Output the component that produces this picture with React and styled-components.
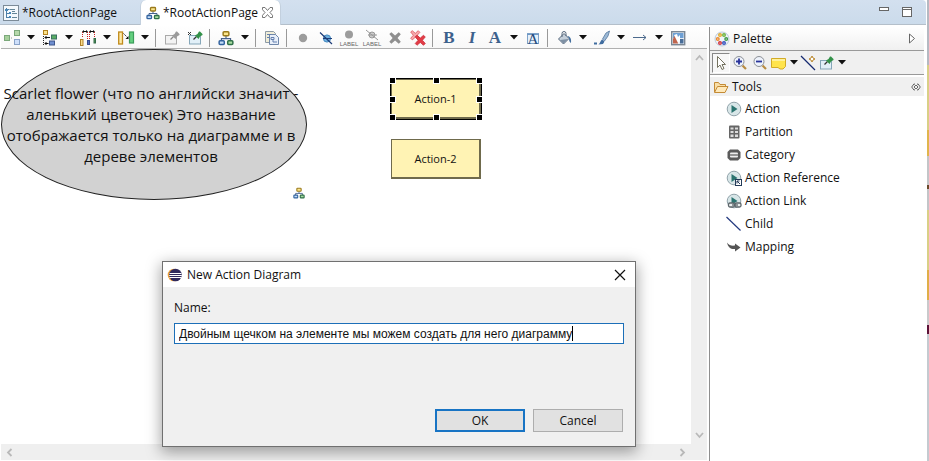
import React from "react";
import styled, { createGlobalStyle, css } from "styled-components";

const GlobalStyle = createGlobalStyle`
  * { box-sizing: border-box; }
  body { margin: 0; background: #fff; }
  body, button, input { font-family: "Open Sans", "Noto Sans", sans-serif; font-size: 12px; line-height: 16px; color: #111; }
  button { border: 0; padding: 0; background: none; }
  svg { display: block; flex: none; overflow: visible; }
  ul { list-style: none; margin: 0; padding: 0; }
`;

/* ---------- layout ---------- */

const Workbench = styled.div`
  position: relative;
  display: flex;
  min-height: 100vh;
  overflow: hidden;
`;

const Editor = styled.main`
  flex: 1;
  min-width: 0;
  display: flex;
  flex-direction: column;
  padding-right: 1px;
  background: #fff;
`;

const TabBar = styled.header`
  display: flex;
  height: 25px;
  flex: none;
  background: linear-gradient(#d3e0ef, #cbdbeb);
  border-bottom: 1px solid #b4bfca;
  border-top-right-radius: 4px;
`;

const Tab = styled.button`
  display: flex;
  align-items: center;
  gap: 3px;
  height: 25px;
  padding: 0 7px 0 3px;
  width: ${(p) => (p.$active ? "141px" : "140px")};
  ${(p) =>
    p.$active &&
    css`
      background: #fff;
      border: 1px solid #c3d0de;
      border-width: 0 1px;
      border-radius: 6px 6px 0 0;
      padding-left: 5px;
    `}
`;

const TabLabel = styled.span`
  flex: 1;
  text-align: left;
  white-space: nowrap;
`;

const WindowControls = styled.div`
  margin-left: auto;
  display: flex;
  gap: 12px;
  align-items: center;
  padding-right: 14px;
`;

const Columns = styled.div`
  flex: 1;
  display: flex;
  min-height: 0;
`;

const DiagramPane = styled.section`
  flex: 1;
  min-width: 0;
  display: flex;
  flex-direction: column;
  padding: 0 2px 0 1px;
`;

const Toolbar = styled.div`
  display: flex;
  align-items: center;
  flex: none;
  height: 24px;
  padding-top: 2px;
  background: linear-gradient(#fff, #f8f8f8);
  border-bottom: 1px solid #b0b0b0;
`;

const ToolButton = styled.button`
  display: flex;
  align-items: center;
  height: 20px;
  padding-left: 3px;
  width: ${(p) => (p.$menu ? "38px" : "23px")};
  gap: 7px;
`;

const Glyph = styled.span`
  width: 16px;
  text-align: center;
  font: ${(p) => (p.$italic ? "italic" : "normal")} bold 17px/20px "Liberation Serif", serif;
  color: #3d618c;
`;

const Divider = styled.span`
  width: 1px;
  height: 18px;
  margin: 0 5px 0 2px;
  background: #999;
`;

const Viewport = styled.div`
  flex: 1;
  display: grid;
  grid-template: minmax(0, 1fr) 16px / minmax(0, 1fr) 16px;
  padding-bottom: 1px;
`;

const Canvas = styled.div`
  position: relative;
  overflow: hidden;
  background: #fff;
`;

const ScrollBar = styled.div`
  display: flex;
  flex-direction: ${(p) => (p.$vertical ? "column" : "row")};
  justify-content: space-between;
  align-items: center;
  padding: ${(p) => (p.$vertical ? "4px 0" : "0 4px")};
  background: #efefef;
`;

const Corner = styled.div`
  background: #efefef;
`;

/* ---------- diagram ---------- */

const EllipseNode = styled.div`
  position: absolute;
  left: 0;
  top: 0;
  width: 306px;
  height: 151px;
  display: flex;
  align-items: center;
  justify-content: center;
  padding-right: 6px;
  border: 1px solid #222;
  border-radius: 50%;
  background: #d2d2d2;
  font-size: 15px;
  line-height: 21px;
  text-align: center;
  white-space: pre;
`;

const NodeBadge = styled.div`
  position: absolute;
  left: 292px;
  top: 138px;
`;

const ActionNode = styled.div`
  position: absolute;
  left: 390px;
  top: ${(p) => p.$top}px;
  width: 90px;
  height: 40px;
  display: flex;
  align-items: center;
  justify-content: center;
  background: #fff3b4;
  border: 1px solid #6f6a4c;
  border-width: 1px 2px 2px 1px;
  font-size: 11px;
  ${(p) => p.$selected && css`outline: 1px solid #000;`}
`;

const Handle = styled.i`
  position: absolute;
  left: ${(p) => p.$x};
  top: ${(p) => p.$y};
  width: 5px;
  height: 5px;
  margin: -2px;
  background: #000;
  outline: 1px solid #fff;
`;

/* ---------- palette ---------- */

const Palette = styled.aside`
  width: 215px;
  flex: none;
  display: flex;
  flex-direction: column;
  margin: 2px 2px 0 0;
  border-left: 1px solid #8f8f8f;
`;

const PaletteTitle = styled.div`
  display: flex;
  align-items: center;
  gap: 3px;
  height: 24px;
  padding: 0 8px 0 4px;
  background: linear-gradient(#fff, #f0f0f0);
  border-bottom: 1px solid #999;
  & > span { flex: 1; }
`;

const PaletteTools = styled.div`
  display: flex;
  align-items: center;
  height: 24px;
  padding: 2px;
  background: #f0f0f0;
  border-bottom: 1px solid #999;
  margin-bottom: 2px;
`;

const PaletteTool = styled.button`
  display: flex;
  align-items: center;
  justify-content: center;
  gap: 4px;
  width: ${(p) => p.$w}px;
  height: 20px;
  ${(p) =>
    p.$pressed &&
    css`
      background: #f7f7f7;
      border: 1px solid #fff;
      border-top-color: #888;
      border-left-color: #888;
    `}
`;

const Drawer = styled.button`
  display: flex;
  align-items: center;
  gap: 3px;
  height: 19px;
  padding: 0 3px;
  background: #f0f0f0;
  text-align: left;
  & > span { flex: 1; }
`;

const PaletteList = styled.ul`
  padding-top: 1px;
`;

const PaletteItem = styled.button`
  display: flex;
  align-items: center;
  gap: 3px;
  width: 100%;
  height: 23px;
  padding-left: 16px;
`;

/* Sliver of the neighbouring window behind the editor */
const Behind = styled.div`
  width: 2px;
  flex: none;
  background: linear-gradient(
    #b5b9c2 0 65px, #d9cf86 65px 130px, #dfb54c 130px 156px, #c3c5c8 156px 185px,
    #6b4a2a 185px 189px, #c3c5c8 189px 210px, #d9cf86 210px 270px, #dfae48 270px 300px,
    #c9c9cb 300px 325px, #5c1238 325px 334px, #c4cad0 334px
  );
`;

/* ---------- dialog ---------- */

const Dialog = styled.form`
  position: absolute;
  left: 162px;
  top: 261px;
  width: 474px;
  background: #f0f0f0;
  border: 1px solid #707070;
  box-shadow: 0 4px 14px 1px rgba(0, 0, 0, 0.36);
`;

const DialogTitle = styled.div`
  display: flex;
  align-items: center;
  gap: 5px;
  height: 25px;
  padding: 0 9px 0 5px;
  background: #fff;
  & > span { flex: 1; }
`;

const DialogBody = styled.div`
  padding: 13px 11px 14px;
`;

const NameLabel = styled.label`
  display: block;
  height: 23px;
`;

const Field = styled.div`
  display: flex;
  height: 21px;
  padding: 1px 4px;
  background: #fff;
  border: 1px solid #1c6fb8;
`;

const NameInput = styled.input`
  field-sizing: content;
  border: 0;
  padding: 0;
  outline: 0;
  background: none;
  font-family: "Liberation Sans", Arial, sans-serif;
`;

const Caret = styled.span`
  width: 1px;
  height: 15px;
  margin-top: 1px;
  background: #000;
`;

const Actions = styled.div`
  display: flex;
  justify-content: flex-end;
  gap: 8px;
  margin-top: 65px;
  padding-right: 1px;
`;

const PushButton = styled.button`
  width: 90px;
  height: 23px;
  background: #e1e1e1;
  border: ${(p) => (p.$primary ? "2px solid #1874c4" : "1px solid #adadad")};
`;

/* ---------- icons ---------- */

const Svg = ({ s = 16, children, ...rest }) => (
  <svg width={s} height={s} viewBox={`0 0 ${s} ${s}`} fill="none" aria-hidden="true" {...rest}>
    {children}
  </svg>
);

const DropArrow = () => (
  <svg width="8" height="5" viewBox="0 0 8 5"><path d="M0 0h8L4 4.5z" fill="#111" /></svg>
);

const OutlineIcon = () => (
  <Svg>
    <rect x=".5" y=".5" width="15" height="15" fill="#f4f9fd" stroke="#7c8b98" />
    <path d="M3.5 3v10M3.5 4.500h3M3.500 8.500h4M3.500 12.500h4" stroke="#4c7fa8" />
    <path d="M2 4h3v2H2zM6 7h2v2H6zM6 11h2v2H6z" fill="#4b88b8" />
    <path d="M7 4.500h5M9 8.500h5M9 12.500h5M9 6.500h3" stroke="#668799" />
  </Svg>
);

const TreeIcon = ({ s = 14 }) => (
  <svg width={s} height={s} viewBox="0 0 14 14" fill="none">
    <path d="M7 5v3M3 9.500V7.500h8v2" stroke="#47628c" />
    <rect x="4.500" y="1.500" width="5" height="3.500" rx=".8" fill="#fbe68c" stroke="#9a7a1c" strokeWidth="1.300" />
    <rect x="1" y="9.500" width="4.500" height="3.200" rx=".8" fill="#c4dcf7" stroke="#32639f" strokeWidth="1.300" />
    <rect x="8.500" y="9.500" width="4.500" height="3.200" rx=".8" fill="#a9dca1" stroke="#2f7048" strokeWidth="1.300" />
  </svg>
);

const CloseTabIcon = () => (
  <Svg s={11}>
    <path d="M.5.5h2.500l2.500 3 2.500-3h2.500v2.200L8 5.500l2.500 2.800v2.200H8l-2.500-3-2.500 3H.5V8.300L3 5.500.5 2.700z" stroke="#777" />
  </Svg>
);

const ArrangeIcon = () => (
  <Svg>
    <rect x=".5" y="5.500" width="5" height="5" fill="#a6cf9b" stroke="#7ba87a" />
    <rect x="10.500" y=".5" width="5" height="5" fill="#b6d8ab" stroke="#7ba87a" />
    <rect x="10.500" y="9.500" width="5" height="5" fill="#cfe0fb" stroke="#8ba3c8" />
    <path d="M7 8h2" stroke="#999" strokeDasharray="1 1" />
  </Svg>
);

const AlignIcon = () => (
  <Svg>
    <rect x="1.500" y=".5" width="4" height="4" fill="#fbe28a" stroke="#b4831f" />
    <rect x="9.500" y="5" width="5" height="4" fill="#58ad62" stroke="#3b6f63" />
    <rect x="7.500" y="11" width="5" height="4" fill="#6f8fd0" stroke="#40578c" />
    <path d="M1.500 6v10" stroke="#222" strokeDasharray="1 1" />
    <path d="M3 7.500h5M3 13.500h3.500M4.500 6L3 7.500 4.500 9M4.500 12L3 13.500 4.500 15" stroke="#111" />
  </Svg>
);

const DistributeIcon = () => (
  <Svg>
    <path d="M2.500 2v6M7.500 2v9M9.500 2v9M14.500 2v6" stroke="#c22" strokeDasharray="1 1" />
    <path d="M3 1.500h4M10 1.500h4" stroke="#111" />
    <path d="M2 1.500L4 0v3zM8 1.500L6 0v3zM9 1.500L11 0v3zM15 1.500L13 0v3z" fill="#111" />
    <rect x=".5" y="9.500" width="2.500" height="6" fill="#f9dc8a" stroke="#b0812a" />
    <rect x="7.500" y="10.500" width="2" height="4" fill="#526ec0" stroke="#354b90" />
    <rect x="14" y="8.500" width="1.500" height="4.500" fill="#4c9b59" stroke="#356b48" />
  </Svg>
);

const SizeIcon = () => (
  <Svg>
    <rect x=".7" y="2" width="3.800" height="12" fill="#fdebaa" stroke="#c18a1b" strokeWidth="1.300" />
    <rect x="11.500" y="2" width="4" height="11" fill="#63d07f" stroke="#3c9d5a" strokeWidth="1.200" />
    <path d="M5.500 3.500l5 5" stroke="#111" strokeDasharray="1.500 1" />
    <path d="M10.500 6v3h-3z" fill="#111" />
  </Svg>
);

const PinIcon = ({ green, unpin }) => (
  <Svg>
    <rect x={green ? "2.500" : "1.500"} y="5.500" width="11" height="8.500" fill={green ? "#e2f0f8" : "#f3f3f3"} stroke={green ? "#86a7b9" : "#aaa"} />
    {unpin && <path d="M1 2l3 3M4 2L1 5" stroke="#333" />}
    <path d="M6.500 9.500l3-3" stroke={green ? "#333" : "#888"} strokeWidth="1.200" />
    <path d="M8 5.500L10.500 4 12 1.500h1L15.500 4v1L13 6.500 11.500 9z" fill={green ? "#329148" : "#9b9b9b"} />
  </Svg>
);

const CopyIcon = () => (
  <Svg>
    <path d="M1.500 1.500h8l2 2v9h-10z" fill="#f0edd8" stroke="#8d9aa5" />
    <path d="M5.500 4.500h6l3 3v7h-9z" fill="#e8eff9" stroke="#6f87aa" />
    <path d="M3 4.500h4M3 7.500h2M7 7.500h3v2H7zM9 12h4M8 11h2" stroke="#637fae" />
  </Svg>
);

const DotIcon = () => <Svg><circle cx="8" cy="8" r="4.200" fill="#9c9c9c" /></Svg>;

const DotOffIcon = () => (
  <Svg>
    <circle cx="9" cy="8.500" r="3.600" fill="#6fb0df" stroke="#4389c0" />
    <path d="M2 2.500l12 11.500M5 8.500h9" stroke="#1d3c78" strokeWidth="1.200" />
  </Svg>
);

const LabelIcon = ({ off }) => (
  <Svg>
    <circle cx="8" cy={off ? 5 : 4.500} r={off ? 3 : 4} fill={off ? "#ccc" : "#9c9c9c"} stroke={off ? "#999" : "none"} />
    {off && <path d="M2 0l12 10M4 5h9" stroke="#999" />}
    <text x="8" y="16" textAnchor="middle" fontFamily="Liberation Sans" fontSize="6" fill="#666">LABEL</text>
  </Svg>
);

const cross = "M1 3l2.500-2L8 5l4.500-4L15 3.500 11 8l4 4.500-2.500 2.500L8 11l-4.500 4L1 12.500 5 8z";
const CrossIcon = () => (
  <Svg><path d={cross} fill="#8f8f8f" transform="translate(1.500 1.500) scale(.82)" /></Svg>
);
const RedCrossIcon = () => (
  <Svg>
    <path d={cross} fill="#f5a9ad" stroke="#dc3f4a" transform="scale(.66)" />
    <path d={cross} fill="#e23c46" stroke="#c92a38" transform="translate(4.500 4.500) scale(.72)" />
  </Svg>
);

const FontBoxIcon = () => (
  <Svg>
    <rect x="2.500" y="3.500" width="11" height="10" fill="#e6f0fa" stroke="#7fa3ca" />
    <path d="M2 4.500h12" stroke="#6f98c4" />
    <text x="8" y="13.500" textAnchor="middle" fontFamily="Liberation Serif" fontSize="15" fill="#24497a">A</text>
  </Svg>
);

const BucketIcon = () => (
  <Svg>
    <path d="M2.500 9L8 3.500l5 5L7.500 14z" fill="#c3ced9" stroke="#56687d" />
    <path d="M6 7V3.500a2 2 0 0 1 4 0V6" stroke="#56687d" />
    <path d="M4 10l3.500 3.500L12 9z" fill="#7e90a4" />
    <path d="M11.500 6c3 .5 4 3 3.500 7-1.500-.5-2-2.500-2-4.500z" fill="#45709f" />
  </Svg>
);

const BrushIcon = () => (
  <Svg>
    <path d="M15.500 1L12 3 8.500 9l2 2 3.500-5z" fill="#9cb9d6" stroke="#54769c" strokeWidth=".8" />
    <path d="M8 9.500l2.500 2L9 14l-4.500.5C6.500 13 6 11 8 9.500z" fill="#3f6c9f" />
    <path d="M0 13.500h3" stroke="#3f6c9f" strokeWidth="2" />
  </Svg>
);

const LineIcon = () => (
  <Svg><path d="M1 7.500h13M11 5l3 2.500-3 2.500" stroke="#4c6a8d" /></Svg>
);

const PictureIcon = () => (
  <Svg>
    <rect x="1.700" y="1.700" width="13" height="13" fill="#e8eef5" stroke="#7b8794" strokeWidth="1.400" />
    <path d="M3 3h10.500v5H3z" fill="#6ea0d4" />
    <path d="M3 13.500V9l2-4 3 2v6.500z" fill="#c0654d" />
    <path d="M4 5l3-1 1 3 2-2v6l-2 2z" fill="#fff" />
    <path d="M10 13.500V9h3.500v4.500z" fill="#486d99" />
  </Svg>
);

const PaletteIcon = () => (
  <Svg>
    <circle cx="8" cy="8" r="7" fill="#eef3fa" stroke="#bccadb" />
    <g strokeWidth="1.400" fill="#fff">
      <circle cx="6" cy="4" r="1.300" stroke="#e0a92b" /><circle cx="10" cy="4" r="1.300" stroke="#6db33f" />
      <circle cx="3.800" cy="8" r="1.300" stroke="#ed8a2e" /><circle cx="12.200" cy="8" r="1.300" stroke="#3f9a49" />
      <circle cx="6" cy="12" r="1.300" stroke="#d3333d" /><circle cx="10" cy="12" r="1.300" stroke="#3552bd" />
    </g>
  </Svg>
);

const ExpandIcon = () => (
  <svg width="8" height="11" viewBox="0 0 8 11"><path d="M1.500 1l5 4.500-5 4.500z" fill="#fff" stroke="#666" /></svg>
);

const CursorIcon = () => (
  <Svg><path d="M4.500 1.500v11l2.500-2.500 2 4.500 2-1-2-4h3.500z" fill="#fff" stroke="#74725f" /></Svg>
);

const ZoomIcon = ({ plus }) => (
  <Svg>
    <path d="M10.500 10.500l3.500 3.500" stroke="#b88c42" strokeWidth="2.200" />
    <circle cx="7" cy="6.500" r="5" fill="#edf2fb" stroke="#8b8f96" />
    <path d={plus ? "M4 6.500h6M7 3.500v6" : "M4 6.500h6"} stroke="#28339a" strokeWidth="1.800" />
  </Svg>
);

const NoteIcon = () => (
  <Svg><path d="M1.500 3.500h14v8l-2.500 2.500h-3l-2-1.500H1.500z" fill="#ffe44c" stroke="#d2ab27" /><path d="M2 4h13v2H2z" fill="#fff19a" /></Svg>
);

const NoteLinkIcon = () => (
  <Svg>
    <path d="M1 1l14 14" stroke="#15296f" strokeWidth="1.300" />
    <path d="M12 1l1 2 2 1-2 1-1 2-1-2-2-1 2-1z" fill="#fff" stroke="#b88428" />
  </Svg>
);

const FolderIcon = () => (
  <Svg>
    <path d="M1.500 13V3.500h4l1.500 2h5.500V8" fill="#f9dfa8" stroke="#c48b35" />
    <path d="M1.500 13.500L4.500 7.500h10.500l-3 6z" fill="#ffe9ba" stroke="#c48b35" />
  </Svg>
);

const PinnedIcon = () => (
  <svg width="10" height="8" viewBox="0 0 10 8" fill="none"><path d="M4 1.500L3 .8.7 4 3 7.200l1-.7M6 1.500l1-.7L9.300 4 7 7.200l-1-.7M3 4l2-2 2 2-2 2z" stroke="#666" /></svg>
);

const ActionIcon = ({ badge }) => (
  <Svg>
    <circle cx="8" cy="8" r="6.800" fill="#d8e6e8" stroke="#92a4ab" />
    <path d="M5.500 4v8l6-4z" fill="#2b7470" />
    {badge === "ref" && (
      <g><rect x="9.500" y="9.500" width="6" height="6" fill="#fff" stroke="#243b59" /><path d="M14 14l-3-3M11 13.500V11h2.500" stroke="#243b59" /></g>
    )}
    {badge === "link" && (
      <g stroke="#5d666b" strokeWidth="1.300"><rect x="2.500" y="10" width="6" height="4" rx="1.500" fill="#e9eeee" /><rect x="9" y="10" width="6" height="4" rx="1.500" fill="#e9eeee" /><path d="M6 12h6" /></g>
    )}
  </Svg>
);

const PartitionIcon = () => (
  <Svg>
    <rect x="3" y="1.500" width="10.500" height="13" rx="1" fill="#666" />
    <path d="M4.500 3.500h3v2h-3zM9 3.500h3v2H9zM4.500 7h3v2h-3zM9 7h3v2H9zM4.500 10.500h3v2.500h-3zM9 10.500h3v2.500H9z" fill="#dcdcdc" />
  </Svg>
);

const CategoryIcon = () => (
  <Svg>
    <path d="M4 2.500h8L14.500 5v6L12 13.500H4L1.500 11V5z" fill="#5b5b5b" />
    <rect x="4" y="5.500" width="8" height="5" rx="1" fill="#eee" />
    <path d="M4 8h8" stroke="#5b5b5b" strokeWidth="1.200" />
  </Svg>
);

const ChildIcon = () => <Svg><path d="M.5 1l14 13.500" stroke="#23397f" strokeWidth="1.200" /></Svg>;

const MappingIcon = () => (
  <Svg><path d="M1 3.500c2 3 5 3.500 8 3V4.500L14.500 8.500 9 12.500v-2.500C5 10.500 2 8.500 1 3.500z" fill="#555" /></Svg>
);

const EclipseIcon = () => (
  <Svg s={14}>
    <circle cx="6" cy="7" r="6.300" fill="#eea139" />
    <circle cx="7.500" cy="7" r="6.300" fill="#302a5c" />
    <path d="M1.500 5.500h12M1.200 7.500h12.600M1.500 9.500h12" stroke="#fff" />
  </Svg>
);

const chevrons = { up: "M1 7l3.500-4L8 7", down: "M1 2l3.500 4L8 2", left: "M6.500 1L3 4.500 6.500 8", right: "M2.500 1L6 4.500 2.500 8" };
const Chevron = ({ to }) => (
  <Svg s={9}><path d={chevrons[to]} stroke="#b9b9b9" strokeWidth="1.800" /></Svg>
);

/* ---------- data ---------- */

const toolbar = [
  { name: "Arrange", icon: <ArrangeIcon />, menu: true },
  { name: "Align", icon: <AlignIcon />, menu: true },
  { name: "Distribute", icon: <DistributeIcon />, menu: true },
  { name: "Make same size", icon: <SizeIcon />, menu: true },
  null,
  { name: "Pin", icon: <PinIcon /> },
  { name: "Unpin", icon: <PinIcon green unpin /> },
  null,
  { name: "Layout", icon: <TreeIcon s={16} />, menu: true },
  null,
  { name: "Copy format", icon: <CopyIcon /> },
  null,
  { name: "Show", icon: <DotIcon /> },
  { name: "Hide", icon: <DotOffIcon /> },
  { name: "Show label", icon: <LabelIcon /> },
  { name: "Hide label", icon: <LabelIcon off /> },
  { name: "Delete from diagram", icon: <CrossIcon /> },
  { name: "Delete from model", icon: <RedCrossIcon /> },
  null,
  { name: "Bold", icon: <Glyph>B</Glyph> },
  { name: "Italic", icon: <Glyph $italic>I</Glyph> },
  { name: "Font color", icon: <Glyph>A</Glyph>, menu: true },
  { name: "Font", icon: <FontBoxIcon /> },
  null,
  { name: "Fill color", icon: <BucketIcon />, menu: true },
  { name: "Line color", icon: <BrushIcon />, menu: true },
  { name: "Line style", icon: <LineIcon />, menu: true },
  { name: "Background image", icon: <PictureIcon /> },
];

const paletteItems = [
  ["Action", <ActionIcon />],
  ["Partition", <PartitionIcon />],
  ["Category", <CategoryIcon />],
  ["Action Reference", <ActionIcon badge="ref" />],
  ["Action Link", <ActionIcon badge="link" />],
  ["Child", <ChildIcon />],
  ["Mapping", <MappingIcon />],
];

const handles = [
  ["0%", "0%"], ["50%", "0%"], ["100%", "0%"], ["0%", "50%"],
  ["100%", "50%"], ["0%", "100%"], ["50%", "100%"], ["100%", "100%"],
];

const flowerText = [
  "Scarlet flower (что по английски значит -",
  "аленький цветочек) Это название",
  "отображается только на диаграмме и в",
  "дереве элементов",
].join("\n");

/* ---------- page ---------- */

export default function App() {
  return (
    <>
      <GlobalStyle />
      <Workbench>
        <Editor>
          <TabBar>
            <Tab type="button"><OutlineIcon /><TabLabel>*RootActionPage</TabLabel></Tab>
            <Tab type="button" $active><TreeIcon /><TabLabel>*RootActionPage</TabLabel><CloseTabIcon /></Tab>
            <WindowControls>
              <button type="button" aria-label="Minimize">
                <svg width="11" height="12" viewBox="0 0 11 12"><rect x=".5" y="1.500" width="9" height="3" fill="#fff" stroke="#666" /></svg>
              </button>
              <button type="button" aria-label="Maximize">
                <svg width="10" height="10" viewBox="0 0 10 10"><rect x=".5" y=".5" width="9" height="9" fill="#fff" stroke="#666" /><path d="M0 2.500h10" stroke="#666" /></svg>
              </button>
            </WindowControls>
          </TabBar>
          <Columns>
            <DiagramPane>
              <Toolbar>
                {toolbar.map((t, i) =>
                  t ? (
                    <ToolButton key={i} type="button" aria-label={t.name} $menu={t.menu}>
                      {t.icon}
                      {t.menu && <DropArrow />}
                    </ToolButton>
                  ) : (
                    <Divider key={i} />
                  )
                )}
              </Toolbar>
              <Viewport>
                <Canvas>
                  <EllipseNode>{flowerText}</EllipseNode>
                  <NodeBadge><TreeIcon s={12} /></NodeBadge>
                  <ActionNode $top={30} $selected>
                    Action-1
                    {handles.map(([x, y]) => <Handle key={x + y} $x={x} $y={y} />)}
                  </ActionNode>
                  <ActionNode $top={90}>Action-2</ActionNode>
                </Canvas>
                <ScrollBar $vertical><Chevron to="up" /><Chevron to="down" /></ScrollBar>
                <ScrollBar><Chevron to="left" /><Chevron to="right" /></ScrollBar>
                <Corner />
              </Viewport>
            </DiagramPane>
            <Palette>
              <PaletteTitle><PaletteIcon /><span>Palette</span><ExpandIcon /></PaletteTitle>
              <PaletteTools>
                <PaletteTool type="button" aria-label="Select" $w={18} $pressed><CursorIcon /></PaletteTool>
                <PaletteTool type="button" aria-label="Zoom in" $w={20}><ZoomIcon plus /></PaletteTool>
                <PaletteTool type="button" aria-label="Zoom out" $w={19}><ZoomIcon /></PaletteTool>
                <PaletteTool type="button" aria-label="Note" $w={30}><NoteIcon /><DropArrow /></PaletteTool>
                <PaletteTool type="button" aria-label="Note attachment" $w={18}><NoteLinkIcon /></PaletteTool>
                <PaletteTool type="button" aria-label="Pin note" $w={30}><PinIcon green /><DropArrow /></PaletteTool>
              </PaletteTools>
              <Drawer type="button"><FolderIcon /><span>Tools</span><PinnedIcon /></Drawer>
              <PaletteList>
                {paletteItems.map(([name, icon]) => (
                  <li key={name}><PaletteItem type="button">{icon}{name}</PaletteItem></li>
                ))}
              </PaletteList>
            </Palette>
          </Columns>
        </Editor>
        <Behind />
        <Dialog role="dialog" aria-labelledby="dialog-title" onSubmit={(e) => e.preventDefault()}>
          <DialogTitle>
            <EclipseIcon />
            <span id="dialog-title">New Action Diagram</span>
            <button type="button" aria-label="Close"><Svg s={12}><path d="M1 1l10 10M11 1L1 11" stroke="#111" strokeWidth="1.200" /></Svg></button>
          </DialogTitle>
          <DialogBody>
            <NameLabel htmlFor="diagram-name">Name:</NameLabel>
            <Field>
              <NameInput id="diagram-name" defaultValue="Двойным щечком на элементе мы можем создать для него диаграмму" />
              <Caret />
            </Field>
            <Actions>
              <PushButton type="submit" $primary>OK</PushButton>
              <PushButton type="button">Cancel</PushButton>
            </Actions>
          </DialogBody>
        </Dialog>
      </Workbench>
    </>
  );
}
